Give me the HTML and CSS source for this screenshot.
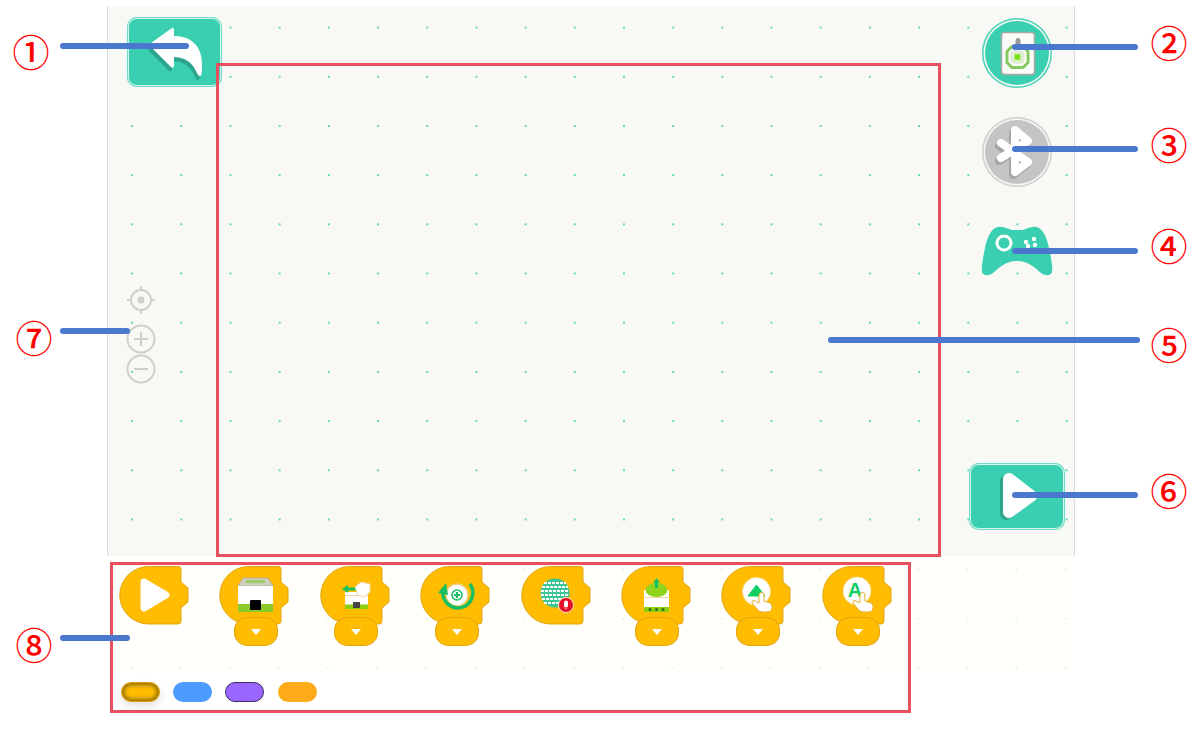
FILE: index.html
```html
<!DOCTYPE html>
<html lang="en">
<head>
    <meta charset="UTF-8">
    <meta name="viewport" content="width=device-width, initial-scale=1.0">
    <title>Programming screen</title>
    <link rel="stylesheet" href="styles.css">
</head>
<body>
    <!-- Shared shapes -->
    <svg class="sprite" aria-hidden="true">
        <symbol id="block" viewBox="0 0 70 60">
            <path d="M29.5 .5H60Q62 .5 62 3V16L69 22V36L62 42V55Q62 58 59 58H29.5A28.75 28.75 0 0 1 29.5 .5Z" fill="#ffbc00" stroke="#e2a716"/>
        </symbol>
        <symbol id="hand" viewBox="0 0 70 60">
            <path d="M38 29q0-2.500 2.500-2.500t2.500 2.500v6l5 1.500q3 1 3 4v1q0 4.500-5 4.500h-5q-3 0-5-3l-5-6q-1-2.500 2-2.500l5 2.500z" fill="#fff" stroke="#e3ae2c"/>
        </symbol>
    </svg>

    <div class="app">
        <div class="stage">
            <div class="stage-left">
                <button class="btn-square btn-back">
                    <svg width="95" height="70" viewBox="0 0 95 70">
                        <path class="arrow-shadow" transform="translate(-2 4)" d="M45 11Q47 10 47 13V19C65 19 76 30 75 50Q75 59 73 59Q71 59 69 54C65 45 57 40 47 40V48Q47 52 44 50L24 30Q22 28 24 26Z"/>
                        <path fill="#fff" d="M45 11Q47 10 47 13V19C65 19 76 30 75 50Q75 59 73 59Q71 59 69 54C65 45 57 40 47 40V48Q47 52 44 50L24 30Q22 28 24 26Z"/>
                    </svg>
                </button>
                <div class="zoom-tools">
                    <svg width="30" height="30" viewBox="0 0 30 30" class="zoom-icon zoom-center">
                        <circle cx="15" cy="15" r="10"/>
                        <path d="M15 1V6M15 24V29M1 15H6M24 15H29"/>
                        <circle class="solid" cx="15" cy="15" r="3.500"/>
                    </svg>
                    <svg width="30" height="30" viewBox="0 0 30 30" class="zoom-icon">
                        <circle cx="15" cy="15" r="13.500"/>
                        <path d="M15 8V22M8 15H22"/>
                    </svg>
                    <svg width="30" height="30" viewBox="0 0 30 30" class="zoom-icon">
                        <circle cx="15" cy="15" r="13.500"/>
                        <path d="M8 15H22"/>
                    </svg>
                </div>
            </div>
            <div class="stage-right">
                <button class="btn-round">
                    <svg width="70" height="70" viewBox="0 0 70 70">
                        <rect x="19.500" y="14.500" width="33" height="42" rx="3" fill="#fbfbf8" stroke="#a9a9a2" stroke-width="1.500"/>
                        <rect x="33.500" y="20" width="5" height="10" rx="2.500" fill="#9a9a94"/>
                        <path d="M30 28.500H41L46 33.500V44.500L41 49.500H30L25 44.500V33.500Z" fill="#fff" stroke="#83c95c" stroke-width="3"/>
                        <path d="M31 33H40L42 35V43L40 45H31L29 43V35Z" fill="#e9f2dc" stroke="#c9d8bc" stroke-width=".8"/>
                        <rect x="31.500" y="35" width="8" height="8" fill="#cbe8a8"/>
                        <rect x="33" y="36.500" width="5" height="5" fill="#72e60f"/>
                    </svg>
                </button>
                <button class="btn-round btn-off">
                    <svg width="70" height="70" viewBox="0 0 70 70">
                        <path d="M19 26L46 45L33 55V13L46 24L19 41" fill="none" stroke="#a6a6a6" stroke-width="8" stroke-linejoin="round" stroke-linecap="round" transform="translate(-2 3)"/>
                        <path d="M19 26L46 45L33 55V13L46 24L19 41" fill="none" stroke="#fff" stroke-width="8" stroke-linejoin="round" stroke-linecap="round"/>
                    </svg>
                </button>
                <svg class="gamepad" width="72" height="50" viewBox="0 0 72 50">
                    <path fill="#3acfb1" d="M17 1C22 0 27 3 31 4H42C46 3 50 0 55 1C62 2 66 12 68 22C70 32 72 42 71 46C70 50 64 50 60 47C54 42 48 35 36 35C24 35 18 42 12 47C8 50 2 50 1 46C0 42 2 32 4 22C6 12 10 2 17 1Z"/>
                    <circle cx="23" cy="17" r="7" fill="none" stroke="#fff" stroke-width="3"/>
                    <circle cx="45" cy="16" r="2.200" fill="#fff"/>
                    <circle cx="53" cy="13" r="2.200" fill="#fff"/>
                    <circle cx="47" cy="20" r="2.200" fill="#fff"/>
                    <circle cx="54" cy="19" r="2.200" fill="#fff"/>
                </svg>
                <button class="btn-square btn-play">
                    <svg width="96" height="67" viewBox="0 0 96 67">
                        <path class="arrow-shadow rounded" transform="translate(-3 2)" d="M40 16L62 33L40 49Z"/>
                        <path class="rounded white" d="M40 16L62 33L40 49Z"/>
                    </svg>
                </button>
            </div>
        </div>

        <div class="palette">
            <div class="block-item">
                <svg class="block" viewBox="0 0 70 60">
                    <use href="#block"/>
                    <path d="M25 16L47 29L25 42Z" fill="#fff" stroke="#fff" stroke-width="7" stroke-linejoin="round"/>
                </svg>
            </div>
            <div class="block-item">
                <svg class="block" viewBox="0 0 70 60">
                    <use href="#block"/>
                    <path d="M24 12H49L54 20H19Z" fill="#cfcfc0" stroke="#a9a99a" stroke-width=".8"/>
                    <rect x="27" y="14" width="19" height="3" fill="#9ccb6a"/>
                    <rect x="19" y="20" width="35" height="26" fill="#fff"/>
                    <rect x="19" y="38" width="35" height="8" fill="#8cc92a"/>
                    <rect x="31" y="34" width="11" height="10" rx="1" fill="#000"/>
                </svg>
                <div class="block-tab"></div>
            </div>
            <div class="block-item">
                <svg class="block" viewBox="0 0 70 60">
                    <use href="#block"/>
                    <rect x="25" y="26" width="23" height="17" fill="#fff"/>
                    <rect x="25" y="29" width="23" height="1" fill="#ecd9a6"/>
                    <rect x="25" y="38.500" width="23" height="4.500" fill="#8bd00f"/>
                    <rect x="33" y="36" width="7" height="6" fill="#444"/>
                    <path d="M22 23L28 19V21.500H37V24.500H28V27Z" fill="#15c25c"/>
                    <path d="M35 21L41 16L50 18L50 26L44 31L38 29Z" fill="#fff" stroke="#ecd9a6"/>
                </svg>
                <div class="block-tab"></div>
            </div>
            <div class="block-item">
                <svg class="block" viewBox="0 0 70 60">
                    <use href="#block"/>
                    <circle cx="37" cy="29" r="11" fill="#fff" stroke="#ecd07c" stroke-width="1.500"/>
                    <path d="M23 25A15 15 0 1 0 50 18" fill="none" stroke="#15bf62" stroke-width="3.500"/>
                    <path d="M18 27L26 17L28 29Z" fill="#15bf62"/>
                    <circle cx="37" cy="29" r="5" fill="none" stroke="#15bf62" stroke-width="1.500"/>
                    <path d="M37 26V32M34 29H40" stroke="#15bf62" stroke-width="2"/>
                </svg>
                <div class="block-tab"></div>
            </div>
            <div class="block-item">
                <svg class="block" viewBox="0 0 70 60">
                    <use href="#block"/>
                    <circle cx="34" cy="27" r="14.500" fill="#3dc596"/>
                    <path class="bricks" d="M23 17H45M21 21H47M20 25H48M20 29H48M21 33H47M23 37H45"/>
                    <circle cx="45" cy="39" r="7.500" fill="#e60f2a" stroke="#fbe3c0"/>
                    <rect x="43" y="34.500" width="4" height="7" rx="2" fill="#fff"/>
                    <path d="M42 40Q45 45 48 40L45 43.500Z" fill="#fff"/>
                </svg>
            </div>
            <div class="block-item">
                <svg class="block" viewBox="0 0 70 60">
                    <use href="#block"/>
                    <rect x="23" y="24" width="25" height="22" rx="1" fill="#fff"/>
                    <rect x="23" y="31" width="25" height="1" fill="#ecd9a6"/>
                    <rect x="23" y="41" width="25" height="5" fill="#8bd00f"/>
                    <circle cx="29" cy="43.500" r="1.500" fill="#2c6d1e"/>
                    <circle cx="35.500" cy="43.500" r="1.500" fill="#2c6d1e"/>
                    <circle cx="42" cy="43.500" r="1.500" fill="#2c6d1e"/>
                    <ellipse cx="35.500" cy="24" rx="11" ry="7" fill="#8fd41a"/>
                    <path d="M35.500 12L39 17H37V22H34V17H32Z" fill="#15bf62"/>
                </svg>
                <div class="block-tab"></div>
            </div>
            <div class="block-item">
                <svg class="block" viewBox="0 0 70 60">
                    <use href="#block"/>
                    <circle cx="35.500" cy="25.500" r="14" fill="#fff" stroke="#f6de94"/>
                    <path d="M35.500 19L44 30H27Z" fill="#0fcf62" stroke="#0fcf62" stroke-linejoin="round"/>
                    <use href="#hand" width="70" height="60"/>
                </svg>
                <div class="block-tab"></div>
            </div>
            <div class="block-item">
                <svg class="block" viewBox="0 0 70 60">
                    <use href="#block"/>
                    <circle cx="35" cy="25" r="14" fill="#fff" stroke="#f6de94"/>
                    <text x="33" y="31" class="block-letter">A</text>
                    <use href="#hand" width="70" height="60"/>
                </svg>
                <div class="block-tab"></div>
            </div>
        </div>

        <div class="categories">
            <span class="pill pill-yellow"></span>
            <span class="pill pill-blue"></span>
            <span class="pill pill-purple"></span>
            <span class="pill pill-orange"></span>
        </div>
    </div>

    <!-- Annotations drawn over the screenshot -->
    <div class="frame frame-5"></div>
    <div class="frame frame-8"></div>
    <div class="line line-1"></div>
    <div class="line line-2"></div>
    <div class="line line-3"></div>
    <div class="line line-4"></div>
    <div class="line line-5"></div>
    <div class="line line-6"></div>
    <div class="line line-7"></div>
    <div class="line line-8"></div>
    <span class="mark mark-1">①</span>
    <span class="mark mark-2">②</span>
    <span class="mark mark-3">③</span>
    <span class="mark mark-4">④</span>
    <span class="mark mark-5">⑤</span>
    <span class="mark mark-6">⑥</span>
    <span class="mark mark-7">⑦</span>
    <span class="mark mark-8">⑧</span>
</body>
</html>
```

FILE: styles.css
```css
body {
    margin: 0;
    background-color: #fff;
    font-family: "Liberation Sans", Arial, sans-serif;
    position: relative;
    height: 735px;
    overflow: hidden;
}
button {
    padding: 0;
    border: none;
    background: none;
    display: block;
}
svg {
    display: block;
}
.sprite {
    display: none;
}
.app {
    width: 968px;
    margin-left: 107px;
    padding-top: 6px;
}
.stage {
    box-sizing: border-box;
    height: 550px;
    display: flex;
    justify-content: space-between;
    background-color: #f8f9f4;
    background-image: radial-gradient(circle, #5ed9c0 1px, transparent 1.4px);
    background-size: 49.2px 49.2px;
    background-position: -0.5px -3px;
    border-left: 1px solid #dcdcdc;
    border-right: 1px solid #dcdcdc;
}
.stage-left {
    padding: 11px 0 0 19px;
    display: flex;
    flex-direction: column;
}
.zoom-tools {
    margin-top: 198px;
    margin-left: -1px;
    display: flex;
    flex-direction: column;
}
.zoom-icon {
    fill: none;
    stroke: #cfcfcb;
    stroke-width: 2;
}
.zoom-icon .solid {
    fill: #cfcfcb;
    stroke: none;
}
.zoom-center {
    margin-bottom: 9px;
}
.stage-right {
    width: 96px;
    margin-right: 9px;
    padding: 12px 0 26px;
    display: flex;
    flex-direction: column;
    align-items: center;
}
.btn-square {
    background-color: #3acfb1;
    border-radius: 10px;
    box-shadow: inset 0 0 0 1px #6fdcc6, inset 0 0 0 2px #d6f5ee;
}
.btn-back {
    width: 95px;
    height: 70px;
}
.btn-play {
    width: 96px;
    height: 67px;
    margin-top: auto;
}
.arrow-shadow {
    fill: #2ea68f;
}
.rounded {
    stroke-width: 12;
    stroke-linejoin: round;
}
.arrow-shadow.rounded {
    stroke: #2ea68f;
}
.white {
    fill: #fff;
    stroke: #fff;
}
.btn-round {
    width: 70px;
    height: 70px;
    margin-bottom: 29px;
    border-radius: 50%;
    background-color: #3acfb1;
    box-shadow: inset 0 0 0 1.5px #4dd3b8, inset 0 0 0 3px #f7f8f4;
}
.btn-off {
    margin-bottom: 39px;
    background-color: #c4c4c4;
    box-shadow: inset 0 0 0 1.5px #cfcfcf, inset 0 0 0 3px #f7f8f4;
}
.palette {
    box-sizing: border-box;
    height: 115px;
    padding: 10px 0 0 12px;
    display: flex;
    align-items: flex-start;
    gap: 30.4px;
    background-color: #fffffc;
    background-image: radial-gradient(circle, #dff6f1 1px, transparent 1.4px);
    background-size: 49.2px 49.2px;
    background-position: -0.5px -11px;
}
.block-item {
    width: 70px;
    display: flex;
    flex-direction: column;
}
.block {
    width: 70px;
    height: 60px;
}
.bricks {
    fill: none;
    stroke: #fff;
    stroke-width: 2;
    stroke-dasharray: 3 1;
}
.block-letter {
    font-family: "Liberation Sans", Arial, sans-serif;
    font-size: 20px;
    font-weight: bold;
    text-anchor: middle;
    fill: #0fcf62;
}
.block-tab {
    box-sizing: border-box;
    width: 44px;
    height: 29px;
    margin: -9px 0 0 14.5px;
    border: 1px solid #e2a716;
    border-radius: 14px / 13px;
    background-color: #ffbc00;
    display: flex;
    align-items: center;
    justify-content: center;
}
.block-tab::after {
    content: "";
    border-left: 5px solid transparent;
    border-right: 5px solid transparent;
    border-top: 6px solid #fff;
}
.categories {
    display: flex;
    gap: 13.2px;
    padding: 11px 0 0 14px;
}
.pill {
    box-sizing: border-box;
    width: 39px;
    height: 20px;
    border-radius: 10px;
}
.pill-yellow {
    background-color: #ffbc00;
    border: 1px solid #d9a010;
    box-shadow: inset 0 0 4px 2px #8a6a00, 0 4px 8px rgba(0, 0, 0, 0.12);
}
.pill-blue {
    background-color: #4c9bff;
}
.pill-purple {
    background-color: #9966ff;
    border: 1px solid #3d2a66;
}
.pill-orange {
    background-color: #ffab19;
}
.frame {
    position: absolute;
    box-sizing: border-box;
    border: 3px solid #e8505f;
}
.frame-5 {
    left: 216px;
    top: 63px;
    width: 725px;
    height: 494px;
}
.frame-8 {
    left: 110px;
    top: 562px;
    width: 801px;
    height: 151px;
}
.line {
    position: absolute;
    height: 6px;
    border-radius: 3px;
    background-color: #4a78cf;
}
.line-1 { left: 60px; top: 43px; width: 129px; }
.line-2 { left: 1012px; top: 44px; width: 126px; }
.line-3 { left: 1012px; top: 146px; width: 126px; }
.line-4 { left: 1012px; top: 248px; width: 126px; }
.line-5 { left: 828px; top: 337px; width: 312px; }
.line-6 { left: 1012px; top: 492px; width: 126px; }
.line-7 { left: 60px; top: 328px; width: 70px; }
.line-8 { left: 60px; top: 635px; width: 70px; }
.mark {
    position: absolute;
    width: 38px;
    text-align: center;
    font-family: "Noto Sans CJK SC", "Liberation Sans", sans-serif;
    font-size: 37px;
    font-weight: 500;
    line-height: 38px;
    color: #f00;
}
.mark-1 { left: 12px; top: 32px; }
.mark-2 { left: 1150px; top: 23px; }
.mark-3 { left: 1150px; top: 125px; }
.mark-4 { left: 1150px; top: 226px; }
.mark-5 { left: 1150px; top: 325px; }
.mark-6 { left: 1150px; top: 471px; }
.mark-7 { left: 15px; top: 318px; }
.mark-8 { left: 15px; top: 625px; }
```
